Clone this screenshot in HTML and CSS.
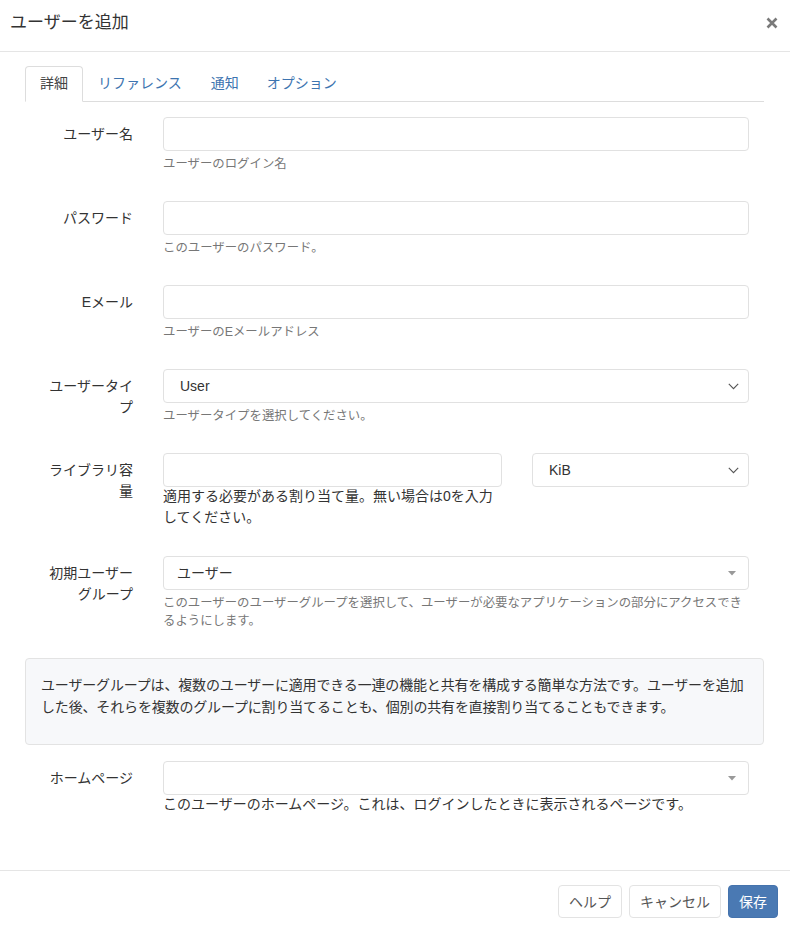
FILE: index.html
```html
<!DOCTYPE html>
<html lang="ja">
<head>
<meta charset="utf-8">
<title>ユーザーを追加</title>
<link rel="stylesheet" href="styles.css">
</head>
<body>
<div class="modal">
  <header class="modal-header">
    <h4 class="modal-title">ユーザーを追加</h4>
    <button class="close" type="button" aria-label="閉じる">
      <svg width="12" height="12" viewBox="0 0 12 12"><path d="M1.5 1.5 L10.5 10.5 M10.5 1.5 L1.5 10.5" stroke="#7a7a7a" stroke-width="2.6" stroke-linecap="butt"/></svg>
    </button>
  </header>

  <main class="modal-body">
    <ul class="tabs">
      <li class="tab active"><a>詳細</a></li>
      <li class="tab"><a>リファレンス</a></li>
      <li class="tab"><a>通知</a></li>
      <li class="tab"><a>オプション</a></li>
    </ul>

    <div class="tab-content">
      <div class="form-row">
        <label class="lbl">ユーザー名</label>
        <div class="field">
          <input class="control" type="text">
          <div class="help">ユーザーのログイン名</div>
        </div>
      </div>

      <div class="form-row">
        <label class="lbl">パスワード</label>
        <div class="field">
          <input class="control" type="password">
          <div class="help">このユーザーのパスワード。</div>
        </div>
      </div>

      <div class="form-row">
        <label class="lbl">Eメール</label>
        <div class="field">
          <input class="control" type="text">
          <div class="help">ユーザーのEメールアドレス</div>
        </div>
      </div>

      <div class="form-row">
        <label class="lbl">ユーザータイプ</label>
        <div class="field">
          <div class="control select native">
            <span class="value">User</span>
            <svg class="chev" width="11" height="7" viewBox="0 0 11 7"><path d="M0.8 0.8 L5.5 5.6 L10.2 0.8" fill="none" stroke="#555" stroke-width="1.1"/></svg>
          </div>
          <div class="help">ユーザータイプを選択してください。</div>
        </div>
      </div>

      <div class="form-row">
        <label class="lbl">ライブラリ容量</label>
        <div class="field split">
          <div class="split-main">
            <input class="control" type="text">
            <div class="help-dark tight">適用する必要がある割り当て量。無い場合は0を入力してください。</div>
          </div>
          <div class="control select native">
            <span class="value">KiB</span>
            <svg class="chev" width="11" height="7" viewBox="0 0 11 7"><path d="M0.8 0.8 L5.5 5.6 L10.2 0.8" fill="none" stroke="#555" stroke-width="1.1"/></svg>
          </div>
        </div>
      </div>

      <div class="form-row">
        <label class="lbl">初期ユーザーグループ</label>
        <div class="field">
          <div class="control select s2">
            <span class="value">ユーザー</span>
            <svg class="caret" width="8" height="5" viewBox="0 0 8 5"><path d="M0 0 L8 0 L4 4.5 Z" fill="#999"/></svg>
          </div>
          <div class="help">このユーザーのユーザーグループを選択して、ユーザーが必要なアプリケーションの部分にアクセスできるようにします。</div>
        </div>
      </div>

      <div class="well">
        <p>ユーザーグループは、複数のユーザーに適用できる一連の機能と共有を構成する簡単な方法です。ユーザーを追加した後、それらを複数のグループに割り当てることも、個別の共有を直接割り当てることもできます。</p>
      </div>

      <div class="form-row">
        <label class="lbl">ホームページ</label>
        <div class="field">
          <div class="control select s2">
            <span class="value"></span>
            <svg class="caret" width="8" height="5" viewBox="0 0 8 5"><path d="M0 0 L8 0 L4 4.5 Z" fill="#999"/></svg>
          </div>
          <div class="help-dark">このユーザーのホームページ。これは、ログインしたときに表示されるページです。</div>
        </div>
      </div>
    </div>
  </main>

  <footer class="modal-footer">
    <button class="btn" type="button">ヘルプ</button>
    <button class="btn" type="button">キャンセル</button>
    <button class="btn primary" type="button">保存</button>
  </footer>
</div>
</body>
</html>
```

FILE: styles.css
```css
* { box-sizing: border-box; }

html, body {
  margin: 0;
  padding: 0;
  height: 100%;
  background: #fff;
}

body {
  font-family: "Liberation Sans", Arial, "Noto Sans CJK JP", sans-serif;
  font-size: 14px;
  line-height: 21px;
  color: #333;
}

.modal {
  display: flex;
  flex-direction: column;
  height: 100%;
}

.modal-header {
  height: 52px;
  flex: none;
  display: flex;
  align-items: center;
  justify-content: space-between;
  padding: 0 12px 6px 10px;
  border-bottom: 1px solid #e5e5e5;
}

.modal-title {
  margin: 0;
  font-size: 17px;
  font-weight: normal;
  line-height: 24px;
  color: #333;
}

.close {
  border: 0;
  background: none;
  padding: 0;
  width: 12px;
  height: 12px;
  display: flex;
  cursor: pointer;
}

.modal-body {
  flex: 1;
  padding: 14px 26px 0 25px;
}

.tabs {
  list-style: none;
  margin: 0;
  padding: 0;
  display: flex;
  border-bottom: 1px solid #ddd;
}

.tab {
  margin-bottom: -1px;
}

.tab a {
  display: block;
  padding: 6px 14px 7px;
  line-height: 21px;
  color: #3d74b0;
  border: 1px solid transparent;
  border-radius: 4px 4px 0 0;
}

.tab + .tab + .tab a {
  padding: 6px 13px 7px;
}

.tab.active a {
  color: #444;
  background: #fff;
  border-color: #ddd #ddd #fff;
}

.tab-content {
  padding-top: 15px;
}

.form-row {
  display: grid;
  grid-template-columns: 123px 1fr;
  margin-bottom: 28px;
}

.lbl {
  text-align: right;
  padding: 7px 15px 0 15px;
  line-height: 21px;
  color: #333;
}

.field {
  padding: 0 15px;
  min-width: 0;
}

.control {
  display: block;
  width: 100%;
  height: 34px;
  margin: 0;
  padding: 0 12px;
  border: 1px solid #e1e1e1;
  border-radius: 4px;
  background: #fff;
  font: inherit;
  color: #333;
}

.select {
  display: flex;
  align-items: center;
  justify-content: space-between;
}

.select.native {
  padding: 0 9px 0 16px;
}

.select.s2 {
  padding: 0 12px 0 13px;
}

.select .value {
  line-height: 20px;
  color: #333;
}

.chev { flex: none; margin-top: 1px; }
.caret { flex: none; margin-top: 1px; }

.help {
  margin-top: 4px;
  font-size: 12.4px;
  line-height: 18px;
  color: #777;
}

.help-dark {
  margin-top: -1px;
  font-size: 14px;
  line-height: 21px;
  color: #333;
}

.help-dark.tight {
  margin-top: -1px;
}

.split {
  display: grid;
  grid-template-columns: 339px 1fr;
  column-gap: 30px;
  align-items: start;
}

.well {
  background: #f7f8fa;
  border: 1px solid #e3e3e3;
  border-radius: 4px;
  padding: 15px 15px 16px;
  margin-bottom: 16px;
}

.well p {
  margin: 0 0 10px;
  line-height: 22px;
  letter-spacing: -0.16px;
  color: #333;
}

.modal-footer {
  flex: none;
  height: 62px;
  border-top: 1px solid #e5e5e5;
  display: flex;
  justify-content: flex-end;
  align-items: flex-start;
  gap: 7px;
  padding: 14px 12px 0;
}

.btn {
  height: 33px;
  padding: 0 10px;
  border: 1px solid #e3e3e3;
  border-radius: 4px;
  background: #fff;
  font: inherit;
  font-size: 14px;
  line-height: 20px;
  color: #555;
  cursor: pointer;
}

.btn.primary {
  background: #4a79b3;
  border-color: #4573ad;
  color: #fff;
}
```
